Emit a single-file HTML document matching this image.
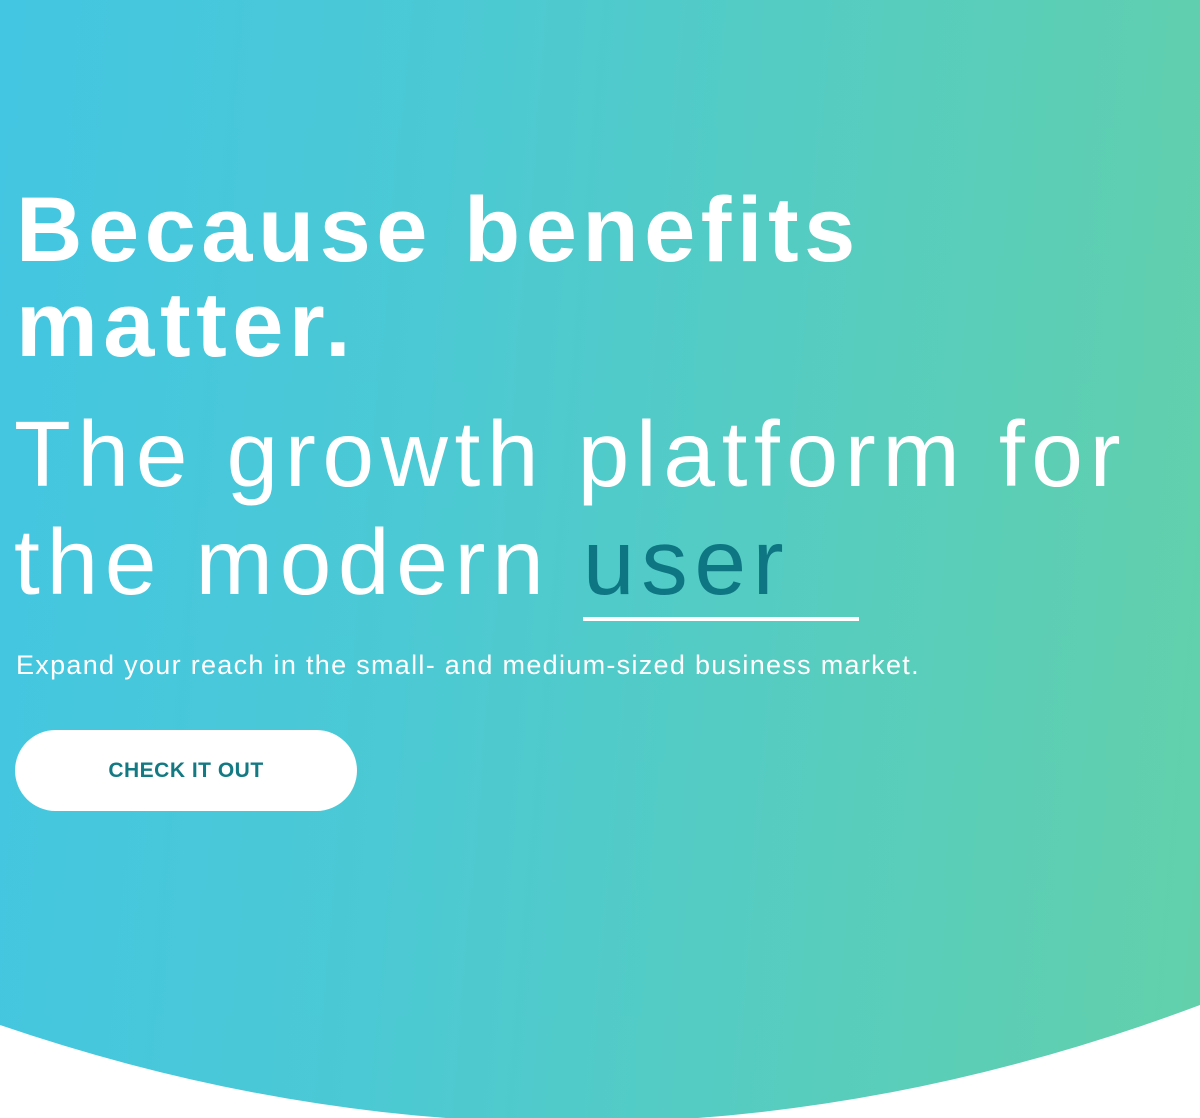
<!DOCTYPE html>
<html><head><meta charset="utf-8"><style>
html,body{margin:0;padding:0;width:1200px;height:1118px;overflow:hidden;background:#fff;font-family:"Liberation Sans",sans-serif}
.bg{position:absolute;left:0;top:0;width:1200px;height:1118px;background:linear-gradient(95deg,#43c6e2 0%,#4bc9d4 35%,#54ccc4 60%,#62d0aa 100%)}
svg{position:absolute;left:0;top:0}
.h1{position:absolute;left:16px;top:183px;color:#fff;font-weight:700;font-size:92px;line-height:95px;letter-spacing:5.5px;margin:0;white-space:nowrap}
.h2{position:absolute;left:14px;top:400px;color:#fff;font-weight:400;font-size:93px;line-height:108px;white-space:nowrap;letter-spacing:6.6px}
.u{color:#0e7682;position:relative;display:inline-block;width:276px}
.u:after{content:"";position:absolute;left:0;right:0;bottom:-5px;height:4px;background:#fff}
p{position:absolute;left:16px;top:650px;margin:0;color:#fff;font-size:27px;letter-spacing:1.3px;white-space:nowrap}
.btn{position:absolute;left:15px;top:730px;width:342px;height:81px;border-radius:41px;background:#fff;color:#137a84;font-weight:700;font-size:21px;display:flex;align-items:center;justify-content:center;letter-spacing:.5px}
</style></head><body>
<div class="bg"></div>
<svg width="1200" height="1118"><path d="M0,1025 Q600,1230 1200,1005 L1200,1118 L0,1118 Z" fill="#fff"/></svg>
<div class="h1">Because benefits<br>matter.</div>
<div class="h2">The growth platform for<br>the modern <span class="u">user</span></div>
<p>Expand your reach in the small- and medium-sized business market.</p>
<div class="btn">CHECK IT OUT</div>
</body></html>
